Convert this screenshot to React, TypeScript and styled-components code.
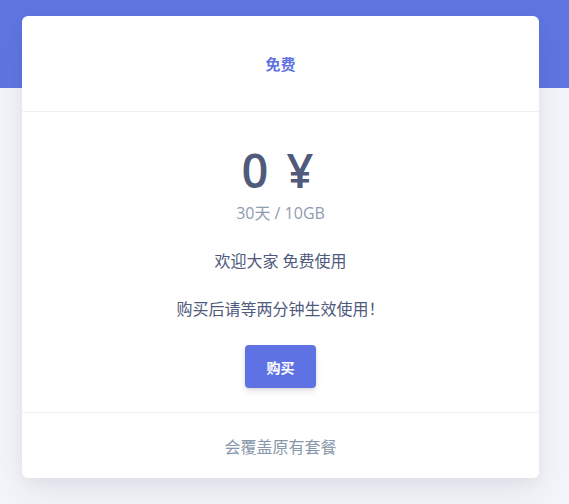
import React from 'react';
import styled, { createGlobalStyle } from 'styled-components';

const GlobalStyle = createGlobalStyle`
  html, body {
    margin: 0;
    padding: 0;
  }
  body {
    font-family: 'Open Sans', 'Noto Sans CJK SC', sans-serif;
    background: #f4f5fa;
  }
`;

export default function App() {
  return (
    <>
      <GlobalStyle />
      <Page>
        <PlanCard>
          <CardHeader>
            <PlanName>免费</PlanName>
          </CardHeader>
          <CardBody>
            <Price>0 ¥</Price>
            <Period>30天 / 10GB</Period>
            <Note>欢迎大家 免费使用</Note>
            <Note>购买后请等两分钟生效使用！</Note>
            <BuyButton>购买</BuyButton>
          </CardBody>
          <CardFooter>会覆盖原有套餐</CardFooter>
        </PlanCard>
      </Page>
    </>
  );
}

const Page = styled.div`
  box-sizing: border-box;
  min-height: 504px;
  padding: 16px 30px 26px 22px;
  background: linear-gradient(to bottom, #5f76e1 0, #5f76e1 88px, #f4f5fa 88px);
`;

const PlanCard = styled.div`
  background: #ffffff;
  border-radius: 6px;
  box-shadow: 0 15px 35px rgba(50, 50, 93, 0.08), 0 5px 15px rgba(0, 0, 0, 0.04);
  overflow: hidden;
`;

const CardHeader = styled.div`
  height: 95px;
  display: flex;
  align-items: center;
  justify-content: center;
  border-bottom: 1px solid #eef0f4;
`;

const PlanName = styled.h4`
  margin: 0;
  font-size: 15px;
  font-weight: 700;
  color: #5e72e4;
`;

const CardBody = styled.div`
  display: flex;
  flex-direction: column;
  align-items: center;
  padding: 31px 0 24px;
  border-bottom: 1px solid #eef0f4;
`;

const Price = styled.div`
  padding-right: 6px;
  font-size: 47px;
  line-height: 55px;
  font-weight: 600;
  color: #4f5a7c;
  word-spacing: 6px;
`;

const Period = styled.div`
  margin-top: 4px;
  font-size: 16px;
  line-height: 22px;
  color: #8f9bb1;
`;

const Note = styled.p`
  margin: 26px 0 0;
  font-size: 16px;
  line-height: 22px;
  color: #4f5a7c;
`;

const BuyButton = styled.button`
  margin-top: 25px;
  width: 71px;
  height: 43px;
  border: 0;
  border-radius: 4px;
  background: #5e72e4;
  color: #ffffff;
  font-family: inherit;
  font-size: 14px;
  font-weight: 700;
  box-shadow: 0 4px 6px rgba(50, 50, 93, 0.11), 0 1px 3px rgba(0, 0, 0, 0.08);
  cursor: pointer;
`;

const CardFooter = styled.div`
  height: 65px;
  display: flex;
  align-items: center;
  justify-content: center;
  font-size: 16px;
  color: #8898aa;
`;
